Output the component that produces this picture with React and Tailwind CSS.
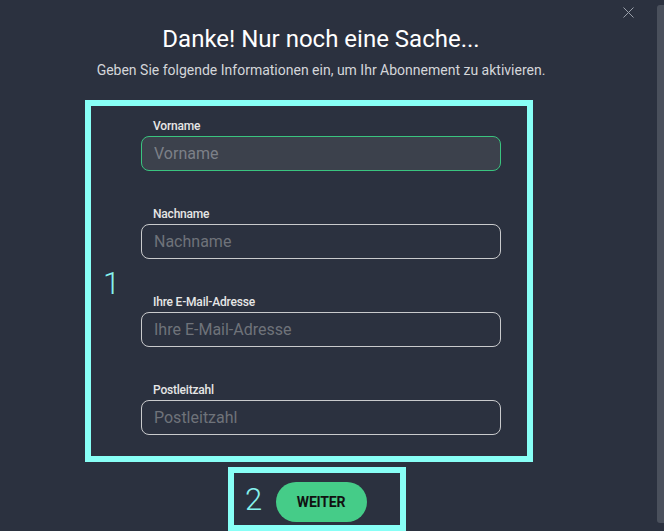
import React from 'react';

const fields = [
    { label: 'Vorname', active: true },
    { label: 'Nachname' },
    { label: 'Ihre E-Mail-Adresse' },
    { label: 'Postleitzahl' },
];

const Field = ({ label, active }) => (
    <div className="mb-[36px]">
        <label className="block text-[12px] leading-[14px] font-medium text-[#e6e6e6] pl-[12px] mb-[3px] tracking-[-0.2px]">
            {label}
        </label>
        <input
            placeholder={label}
            className={
                active
                    ? 'w-full h-[35px] rounded-[8px] border border-[#3ac47f] bg-[#3c414c] px-[12px] text-[16px] text-white placeholder:text-[#7c8088] outline-none'
                    : 'w-full h-[35px] rounded-[8px] border border-[#c9cacc] bg-transparent px-[12px] text-[16px] text-white placeholder:text-[#6f737a] outline-none'
            }
        />
    </div>
);

const App = () => {
    return (
        <div className="relative flex w-[664px] h-[531px] overflow-hidden bg-[#2b313f] font-['Roboto','Liberation_Sans',sans-serif]">
            <div className="w-[642px] flex flex-col items-center">
                <h1 className="mt-[24px] text-[24px] leading-[30px] text-white">Danke! Nur noch eine Sache...</h1>
                <p className="mt-[8px] text-[14px] leading-[16px] text-[#d4d6da]">
                    Geben Sie folgende Informationen ein, um Ihr Abonnement zu aktivieren.
                </p>
                <form className="mt-[41px] w-[360px]">
                    {fields.map((f) => (
                        <Field key={f.label} {...f} />
                    ))}
                </form>
                <button className="mt-[11px] w-[91px] h-[40px] rounded-full bg-[#45cc88] text-[14px] font-bold text-[#111] tracking-[-0.2px]">
                    WEITER
                </button>
            </div>

            {/* close */}
            <button className="absolute left-[623px] top-[7px] w-[11px] h-[11px]">
                <svg viewBox="0 0 11 11" width="11" height="11">
                    <path d="M0.5 0.5L10.5 10.5M10.5 0.5L0.5 10.5" stroke="#9aa0aa" strokeWidth="1" />
                </svg>
            </button>

            {/* scrollbar */}
            <div className="ml-[15px] w-[7px] pt-[5px] pb-[8px]">
                <div className="h-full rounded-l-[3px] bg-[#4a505c]"></div>
            </div>

            {/* annotations */}
            <div className="absolute left-[85px] top-[100px] w-[448px] h-[362px] border-[6px] border-[#88fff6]"></div>
            <span className="absolute left-[103px] top-[266px] text-[31px] leading-[36px] font-light text-[#86f3ee]">1</span>
            <div className="absolute left-[228px] top-[467px] w-[178px] h-[64px] border-[6px] border-[#88fff6]"></div>
            <span className="absolute left-[245px] top-[482px] text-[31px] leading-[36px] font-light text-[#86f3ee]">2</span>
        </div>
    );
};

export default App;
